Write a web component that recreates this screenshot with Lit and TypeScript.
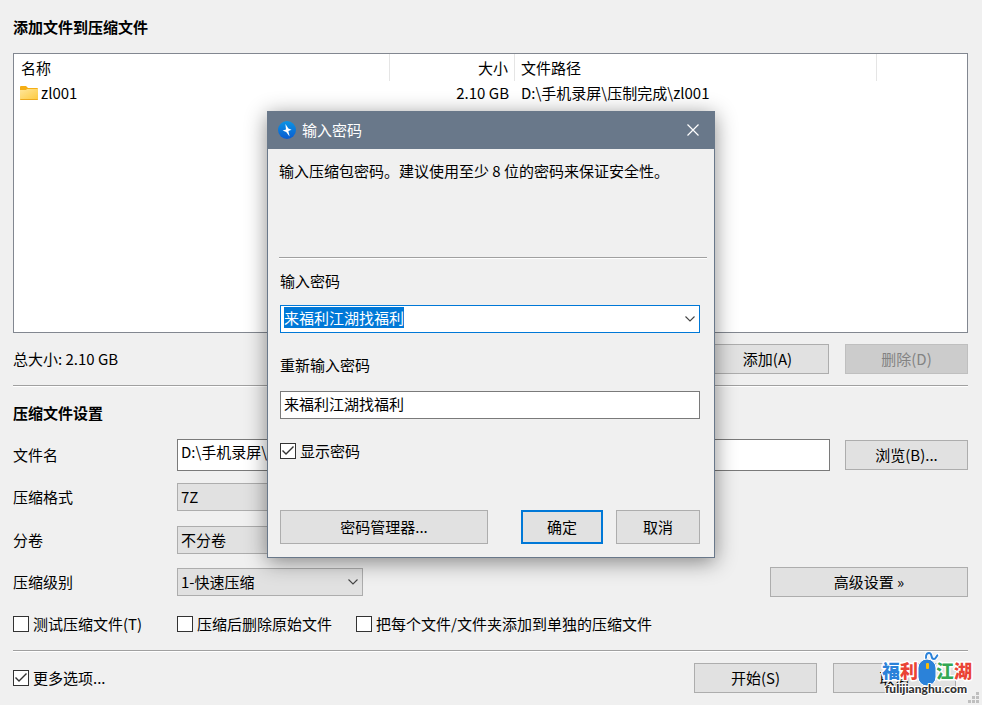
import { LitElement, html, svg, css } from "lit";
import { customElement, query } from "lit/decorators.js";

const FOLDER_PATH = "D:\\手机录屏\\";
const ITEM_PATH = "D:\\手机录屏\\压制完成\\zl001";
const PASSWORD = "来福利江湖找福利";

const chevron = html`
  <svg class="chevron" width="10" height="6" viewBox="0 0 10 6" aria-hidden="true">
    <path d="M0.5 0.5 L5 5 L9.5 0.5" fill="none" stroke="#444" stroke-width="1.1" />
  </svg>
`;

const gripDots = [
  [8, 0],
  [4, 4],
  [8, 4],
  [0, 8],
  [4, 8],
  [8, 8],
];

@customElement("app-root")
export class AppRoot extends LitElement {
  static styles = css`
    :host {
      display: block;
      font-family: "Noto Sans CJK SC", "Noto Sans", sans-serif;
      font-size: 15px;
      line-height: 22px;
      color: #000;
    }
    * {
      box-sizing: border-box;
    }
    button,
    input,
    select {
      font: inherit;
      color: inherit;
      margin: 0;
      border-radius: 0;
      outline: none;
    }
    .window {
      position: relative;
      display: flex;
      flex-direction: column;
      min-height: 100vh;
      padding: 16px 14px 12px 13px;
      background: #f0f0f0;
    }
    h1,
    h2 {
      margin: 0;
      font-size: 15px;
      font-weight: 700;
    }
    .files {
      flex: 1;
      min-height: 120px;
      margin: 15px 0 11px;
      border: 1px solid #828790;
      background: #fff;
    }
    table {
      width: 100%;
      table-layout: fixed;
      border-spacing: 0;
    }
    .col-name {
      width: 376px;
    }
    .col-size {
      width: 125px;
    }
    .col-path {
      width: 362px;
    }
    th,
    td {
      padding: 0 6px;
      font-weight: 400;
      text-align: left;
      white-space: nowrap;
    }
    th {
      height: 27px;
      border-right: 1px solid #e5e5e5;
    }
    th:first-child {
      padding-left: 7px;
    }
    th:last-child {
      border-right: 0;
    }
    td {
      height: 24px;
    }
    .num {
      text-align: right;
    }
    .file {
      display: flex;
      align-items: center;
      gap: 3px;
    }
    .bar {
      display: flex;
      align-items: center;
      gap: 16px;
    }
    .grow {
      flex: 1;
    }
    .btn {
      width: 123px;
      height: 30px;
      padding: 0;
      border: 1px solid #adadad;
      background: #e1e1e1;
      text-align: center;
    }
    .btn:disabled {
      background: #ccc;
      border-color: #bfbfbf;
      color: #838383;
    }
    .btn.wide {
      width: 198px;
      justify-self: end;
      grid-column: 3 / 5;
    }
    .rule {
      height: 2px;
      margin: 11px 0 15px;
      border: 0;
      border-top: 1px solid #a0a0a0;
      background: #fff;
    }
    .form {
      display: grid;
      grid-template-columns: 164px 186px 1fr 138px;
      grid-template-rows: 42px 42px 44px 40px;
      align-items: center;
      margin-top: 10px;
    }
    .form > .btn {
      justify-self: end;
    }
    .form > label {
      grid-column: 1;
    }
    .text {
      width: 100%;
      height: 28px;
      padding: 0 3px 3px;
      border: 1px solid #7a7a7a;
      background: #fff;
    }
    .text.name {
      grid-column: 2 / 4;
      height: 32px;
      padding-bottom: 7px;
    }
    .combo {
      display: grid;
      align-items: center;
    }
    .combo > * {
      grid-area: 1 / 1;
    }
    .combo select {
      width: 100%;
      height: 28px;
      padding: 0 24px 0 3px;
      border: 1px solid #adadad;
      background: #e1e1e1;
      appearance: none;
    }
    .combo > .chevron {
      justify-self: end;
      margin-right: 5px;
      pointer-events: none;
    }
    .checks {
      display: grid;
      grid-template-columns: 164px 179px auto;
      align-items: center;
      height: 44px;
    }
    .check {
      display: flex;
      align-items: center;
      gap: 4px;
      white-space: nowrap;
    }
    .check input {
      appearance: none;
      display: grid;
      flex: none;
      width: 16px;
      height: 16px;
      border: 1px solid #333;
      background: #fff;
    }
    .check input:checked::before {
      content: "";
      background: #333;
      clip-path: polygon(1px 7px, 2px 6px, 5px 9px, 12px 2px, 13px 3px, 5px 11px);
    }
    .rule.low {
      margin: 4px 0 11px;
    }
    .footer {
      padding-right: 12px;
    }
    .grip {
      position: absolute;
      right: 3px;
      bottom: 2px;
    }

    .overlay {
      position: absolute;
      inset: 0;
      display: flex;
      justify-content: center;
      align-items: flex-start;
      padding-top: 111px;
    }
    .dialog {
      width: 448px;
      border: 1px solid #69788a;
      background: #f0f0f0;
      box-shadow: 0 4px 20px rgba(0, 0, 0, 0.45);
    }
    .titlebar {
      display: flex;
      align-items: center;
      gap: 6px;
      height: 37px;
      padding: 0 8px 2px 10px;
      background: #69788a;
      color: #fff;
    }
    .titlebar h2 {
      flex: 1;
      font-weight: 400;
    }
    .close {
      display: grid;
      place-items: center;
      width: 26px;
      height: 26px;
      padding: 0;
      border: 0;
      background: none;
    }
    .body {
      display: flex;
      flex-direction: column;
      padding: 11px 14px 13px 12px;
    }
    .message {
      height: 97px;
      margin: 0 -7px 0 -1px;
    }
    .body .rule {
      margin: 0 -7px 11px -1px;
    }
    .password {
      margin: 13px 0 21px;
    }
    .password .text {
      border-color: #0078d7;
      padding-right: 24px;
    }
    .text::selection {
      background: #0078d7;
      color: #fff;
    }
    .arrow {
      justify-self: end;
      display: grid;
      place-items: center;
      width: 20px;
      height: 26px;
      padding: 0;
      border: 0;
      background: none;
    }
    .again {
      margin: 15px 0 21px;
    }
    .actions {
      display: flex;
      gap: 13px;
      margin-top: 48px;
    }
    .actions .btn {
      width: 84px;
      height: 34px;
    }
    .actions .manager {
      width: 208px;
      margin-right: auto;
    }
    .actions .primary {
      width: 82px;
      border: 2px solid #0078d7;
    }

    .stamp {
      position: absolute;
      right: 9px;
      bottom: 5px;
      pointer-events: none;
    }
    .stamp-name {
      font-size: 18px;
      font-weight: 900;
    }
    .stamp-halo {
      fill: none;
      stroke: #fff;
      stroke-linejoin: round;
      stroke-linecap: round;
    }
    .stamp-name text {
      stroke: #fff;
      stroke-width: 3px;
      stroke-linejoin: round;
      paint-order: stroke;
    }
    .stamp-site {
      font-family: "Lato", sans-serif;
      font-size: 12px;
      font-weight: 900;
      fill: #333;
      stroke: #fff;
      stroke-width: 2px;
      stroke-linejoin: round;
      paint-order: stroke;
    }
    .blue {
      fill: #2b82d9;
    }
    .red {
      fill: #ea4335;
    }
    .green {
      fill: #34a853;
    }
  `;

  @query("#password") private passwordInput!: HTMLInputElement;

  firstUpdated() {
    this.passwordInput.focus();
    this.passwordInput.select();
  }

  private check(label: string, checked = false) {
    return html`<label class="check"><input type="checkbox" .checked=${checked} />${label}</label>`;
  }

  private selectRow(id: string, label: string, value: string) {
    return html`
      <label for=${id}>${label}</label>
      <div class="combo">
        <select id=${id}>
          <option>${value}</option>
        </select>
        ${chevron}
      </div>
    `;
  }

  private renderFiles() {
    return html`
      <div class="files">
        <table>
          <colgroup>
            <col class="col-name" />
            <col class="col-size" />
            <col class="col-path" />
            <col />
          </colgroup>
          <thead>
            <tr>
              <th>名称</th>
              <th class="num">大小</th>
              <th>文件路径</th>
              <th></th>
            </tr>
          </thead>
          <tbody>
            <tr>
              <td>
                <span class="file">
                  <svg width="18" height="14" viewBox="0 0 18 14" aria-hidden="true">
                    <defs>
                      <linearGradient id="folder" x1="0" y1="0" x2="1" y2="1">
                        <stop offset="0" stop-color="#ffe69a" />
                        <stop offset="1" stop-color="#fdc93c" />
                      </linearGradient>
                    </defs>
                    <path d="M0 1a1 1 0 0 1 1-1h5l2 2h9a1 1 0 0 1 1 1v3H0z" fill="#f5ae14" />
                    <path d="M0 4h6l1-1h11v10a1 1 0 0 1-1 1H1a1 1 0 0 1-1-1z" fill="url(#folder)" />
                    <path d="M0 13h18a1 1 0 0 1-1 1H1a1 1 0 0 1-1-1z" fill="#eda91f" />
                  </svg>
                  zl001
                </span>
              </td>
              <td class="num">2.10 GB</td>
              <td>${ITEM_PATH}</td>
              <td></td>
            </tr>
          </tbody>
        </table>
      </div>
    `;
  }

  private renderDialog() {
    return html`
      <div class="overlay">
        <section class="dialog" role="dialog" aria-labelledby="dialog-title">
          <header class="titlebar">
            <svg width="18" height="18" viewBox="0 0 18 18" aria-hidden="true">
              <defs>
                <linearGradient id="disc" x1="0" y1="0" x2="0" y2="1">
                  <stop offset="0" stop-color="#0a94e4" />
                  <stop offset="1" stop-color="#0a5cd0" />
                </linearGradient>
              </defs>
              <circle cx="9" cy="9" r="9" fill="url(#disc)" />
              <path d="M7.4 3 L10.4 7.4 L13.6 8.8 L10.4 10 L11.6 15.4 L8.2 11 L4.6 9.4 L8 8.4 Z" fill="#fff" />
            </svg>
            <h2 id="dialog-title">输入密码</h2>
            <button class="close" aria-label="关闭">
              <svg width="12" height="12" viewBox="0 0 12 12" aria-hidden="true">
                <path d="M0.5 0.5 L11.5 11.5 M11.5 0.5 L0.5 11.5" stroke="#fff" stroke-width="1.2" />
              </svg>
            </button>
          </header>
          <div class="body">
            <div class="message">输入压缩包密码。建议使用至少 8 位的密码来保证安全性。</div>
            <hr class="rule" />
            <label for="password">输入密码</label>
            <div class="combo password">
              <input id="password" class="text" type="text" .value=${PASSWORD} />
              <button class="arrow" aria-label="展开">${chevron}</button>
            </div>
            <label for="again">重新输入密码</label>
            <input id="again" class="text again" type="text" .value=${PASSWORD} />
            ${this.check("显示密码", true)}
            <div class="actions">
              <button class="btn manager">密码管理器...</button>
              <button class="btn primary">确定</button>
              <button class="btn">取消</button>
            </div>
          </div>
        </section>
      </div>
    `;
  }

  private renderStamp() {
    const cord = "M46 12 C44 7 45 3 48 3 C52 3 49 9 53 9 C55 9 55 6 57 5";
    return html`
      <svg class="stamp" width="92" height="50" viewBox="0 0 92 50" role="img" aria-label="福利江湖">
        <g class="stamp-name">
          <text class="blue" x="1" y="28">福</text>
          <text class="red" x="19" y="28">利</text>
          <text class="green" x="55" y="28">江</text>
          <text class="red" x="73" y="28">湖</text>
        </g>
        <path class="stamp-halo" d=${cord} stroke-width="4" />
        <path d=${cord} fill="none" stroke="#2b82d9" stroke-width="2" />
        <rect x="37" y="9" width="18" height="27" rx="9" fill="#2b82d9" stroke="#fff" stroke-width="1" />
        <rect x="45" y="13" width="3" height="6" rx="1" fill="#fbbc05" />
        <text class="stamp-site" x="4" y="43">fulijianghu.com</text>
      </svg>
    `;
  }

  render() {
    return html`
      <main class="window">
        <h1>添加文件到压缩文件</h1>
        ${this.renderFiles()}
        <div class="bar">
          <span class="grow">总大小: 2.10 GB</span>
          <button class="btn">添加(A)</button>
          <button class="btn" disabled>删除(D)</button>
        </div>
        <hr class="rule" />
        <h2>压缩文件设置</h2>
        <div class="form">
          <label for="name">文件名</label>
          <input id="name" class="text name" type="text" .value=${FOLDER_PATH} />
          <button class="btn">浏览(B)...</button>
          ${this.selectRow("format", "压缩格式", "7Z")} ${this.selectRow("split", "分卷", "不分卷")}
          ${this.selectRow("level", "压缩级别", "1-快速压缩")}
          <button class="btn wide">高级设置 »</button>
        </div>
        <div class="checks">
          ${this.check("测试压缩文件(T)")} ${this.check("压缩后删除原始文件")}
          ${this.check("把每个文件/文件夹添加到单独的压缩文件")}
        </div>
        <hr class="rule low" />
        <div class="bar footer">
          <span class="grow">${this.check("更多选项...", true)}</span>
          <button class="btn">开始(S)</button>
          <button class="btn">取消</button>
        </div>
        <svg class="grip" width="11" height="11" viewBox="0 0 11 11" aria-hidden="true">
          ${gripDots.map(([x, y]) => svg`<rect x=${x} y=${y} width="3" height="3" fill="#bfbfbf" />`)}
        </svg>
        ${this.renderDialog()} ${this.renderStamp()}
      </main>
    `;
  }
}
